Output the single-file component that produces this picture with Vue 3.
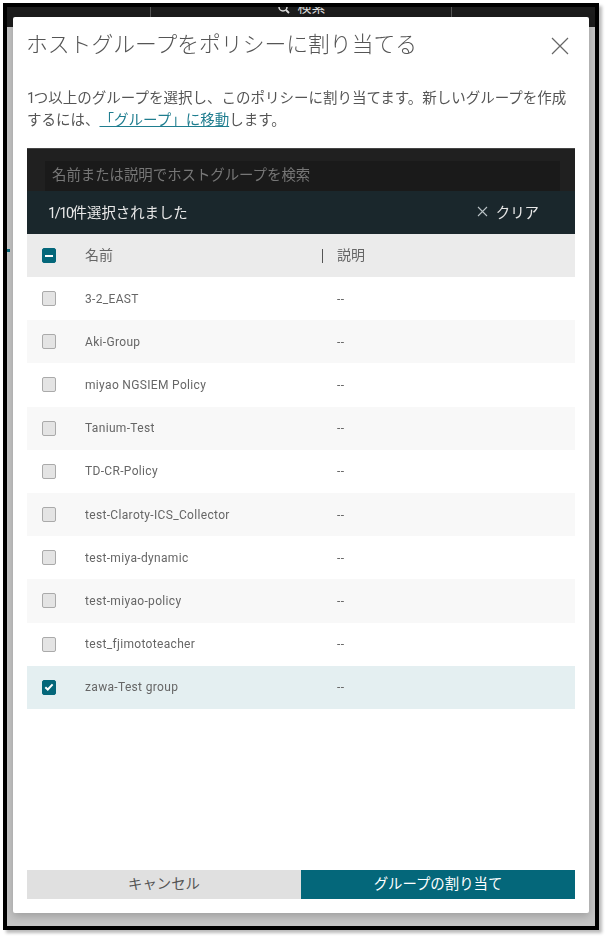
<script setup>
const groups = [
  { name: '3-2_EAST' },
  { name: 'Aki-Group' },
  { name: 'miyao NGSIEM Policy' },
  { name: 'Tanium-Test' },
  { name: 'TD-CR-Policy' },
  { name: 'test-Claroty-ICS_Collector' },
  { name: 'test-miya-dynamic' },
  { name: 'test-miyao-policy' },
  { name: 'test_fjimototeacher' },
  { name: 'zawa-Test group', selected: true }
]
</script>

<template>
  <div class="page">
    <div class="frame">
      <div class="topbar">
        <div class="search-tab">
          <svg class="mag" width="13" height="12" viewBox="0 0 13 12"><circle cx="6" cy="3" r="4" fill="none" stroke="#ddd" stroke-width="1.5"/><path d="M9 6 12 9" stroke="#ddd" stroke-width="1.8"/></svg>
          <span>検索</span>
        </div>
      </div>
      <span class="side-mark"></span>
      <div class="modal">
        <header class="head">
          <h1>ホストグループをポリシーに割り当てる</h1>
          <svg class="close" width="18" height="18" viewBox="0 0 18 18"><path d="M1 1 17 17M17 1 1 17" stroke="#666" stroke-width="1.2" fill="none"/></svg>
        </header>
        <p class="desc"><span class="tight">1</span>つ以上のグループを選択し、このポリシーに割り当てます。新しいグループを作成するには、<a>「グループ」に移動</a>します。</p>
        <section class="table">
          <div class="search"><div class="input">名前または説明でホストグループを検索</div></div>
          <div class="selbar">
            <span class="count"><span class="tight">1/10</span>件選択されました</span>
            <span class="clear">
              <svg width="11" height="11" viewBox="0 0 11 11"><path d="M1 1 10 10M10 1 1 10" stroke="#b9c2c5" stroke-width="1.1" fill="none"/></svg>
              クリア
            </span>
          </div>
          <div class="row header">
            <span class="box on"><i class="dash"></i></span>
            <span class="name">名前</span>
            <span class="sep"></span>
            <span class="dsc">説明</span>
          </div>
          <div v-for="g in groups" :key="g.name" class="row item" :class="{ selected: g.selected }">
            <span class="box" :class="{ on: g.selected }">
              <svg v-if="g.selected" width="10" height="8" viewBox="0 0 10 8"><path d="M1.3 4.2 3.8 6.5 8.6 1.4" stroke="#fff" stroke-width="2" fill="none"/></svg>
            </span>
            <span class="name">{{ g.name }}</span>
            <span class="dsc">--</span>
          </div>
        </section>
        <footer class="actions">
          <button class="cancel">キャンセル</button>
          <button class="assign">グループの割り当て</button>
        </footer>
      </div>
    </div>
  </div>
</template>

<style>
html, body { margin: 0; background: #fff; }
</style>

<style scoped>
.page {
  width: 608px;
  height: 939px;
  padding: 3px 0 0 3px;
  box-sizing: border-box;
  overflow: hidden;
  font-family: Roboto, "Noto Sans CJK JP", sans-serif;
  text-spacing-trim: space-all;
  filter: blur(0.4px);
}
.frame {
  position: relative;
  width: 596px;
  height: 927px;
  box-sizing: border-box;
  border: 4px solid #000;
  background: #c4c4c4;
  box-shadow: 3px 3px 3px #bbb;
}
.topbar {
  height: 20px;
  background: #1c1c1c;
  display: flex;
  justify-content: center;
  overflow: hidden;
}
.search-tab {
  width: 302px;
  height: 10px;
  border-left: 1px solid #555;
  border-right: 1px solid #555;
  display: flex;
  justify-content: center;
  align-items: flex-end;
  gap: 8px;
  padding-bottom: 3px;
  color: #ddd;
  font-size: 14px;
  line-height: 14px;
  box-sizing: border-box;
}
.mag { flex: none; margin-bottom: -2px; }
.side-mark {
  position: absolute;
  left: 0;
  top: 242px;
  width: 3px;
  height: 3px;
  background: #04677a;
}
.modal {
  position: absolute;
  left: 6px;
  top: 10px;
  width: 576px;
  height: 896px;
  background: #fff;
  border-radius: 2px;
  box-shadow: 0 3px 8px rgba(0, 0, 0, 0.2);
  padding: 0 14px;
  box-sizing: border-box;
  display: flex;
  flex-direction: column;
}
.head {
  display: flex;
  justify-content: space-between;
  align-items: center;
  height: 53px;
  padding-right: 6px;
}
.head h1 {
  margin: 1px 0 0 -1px;
  font-size: 21.8px;
  font-weight: 300;
  color: #555;
  line-height: 53px;
}
.close { margin-top: 4px; }
.desc {
  margin: 18px 0 0;
  width: 548px;
  font-size: 14.5px;
  line-height: 22px;
  color: #555;
  height: 44px;
}
.tight { letter-spacing: -1.4px; }
.desc a {
  color: #1f7d8f;
  text-decoration: underline;
}
.table { margin-top: 16px; width: 548px; }
.search {
  height: 43px;
  background: #202020;
  border-top: 1px solid #444;
  box-sizing: border-box;
  padding: 12px 15px 0 18px;
}
.input {
  height: 30px;
  background: #1a1a1a;
  color: #777;
  font-size: 14.4px;
  line-height: 29px;
  padding-left: 7px;
}
.selbar {
  height: 43px;
  background: #1a272c;
  display: flex;
  justify-content: space-between;
  align-items: center;
  padding: 0 36px 3px 21px;
  box-sizing: border-box;
  color: #e8e8e8;
  font-size: 14.4px;
}
.clear { display: flex; align-items: center; gap: 8px; }
.row {
  display: flex;
  align-items: center;
  height: 43.2px;
  padding-left: 15px;
  font-size: 12px;
  letter-spacing: 0.33px;
  color: #666;
  box-sizing: border-box;
}
.header { background: #ebebeb; font-size: 14px; height: 43px; letter-spacing: 0; }
.header .name, .header .dsc { margin-bottom: 3px; }
.item:nth-child(odd) { background: #f8f8f8; }
.item:nth-child(even) { background: #fff; }
.item.selected { background: #e4eff1; }
.box {
  width: 14px;
  height: 15px;
  flex: none;
  box-sizing: border-box;
  border: 1px solid #aaa;
  border-radius: 2px;
  background: #e4e4e4;
  display: flex;
  align-items: center;
  justify-content: center;
}
.box.on { background: #04677a; border-color: #04677a; }
.dash { width: 8px; height: 2px; background: #fff; }
.name { margin-left: 29px; width: 252px; flex: none; }
.header .name { width: 237px; }
.sep { width: 1px; height: 14px; background: #555; margin-right: 14px; flex: none; }
.actions {
  position: absolute;
  left: 14px;
  top: 853px;
  width: 548px;
  display: flex;
}
.actions button {
  flex: 1;
  height: 29px;
  border: 0;
  font: inherit;
  font-size: 14.4px;
  padding: 0 0 5px;
}
.cancel { background: #e0e0e0; color: #555; }
.assign { background: #04677a; color: #fff; }
</style>
